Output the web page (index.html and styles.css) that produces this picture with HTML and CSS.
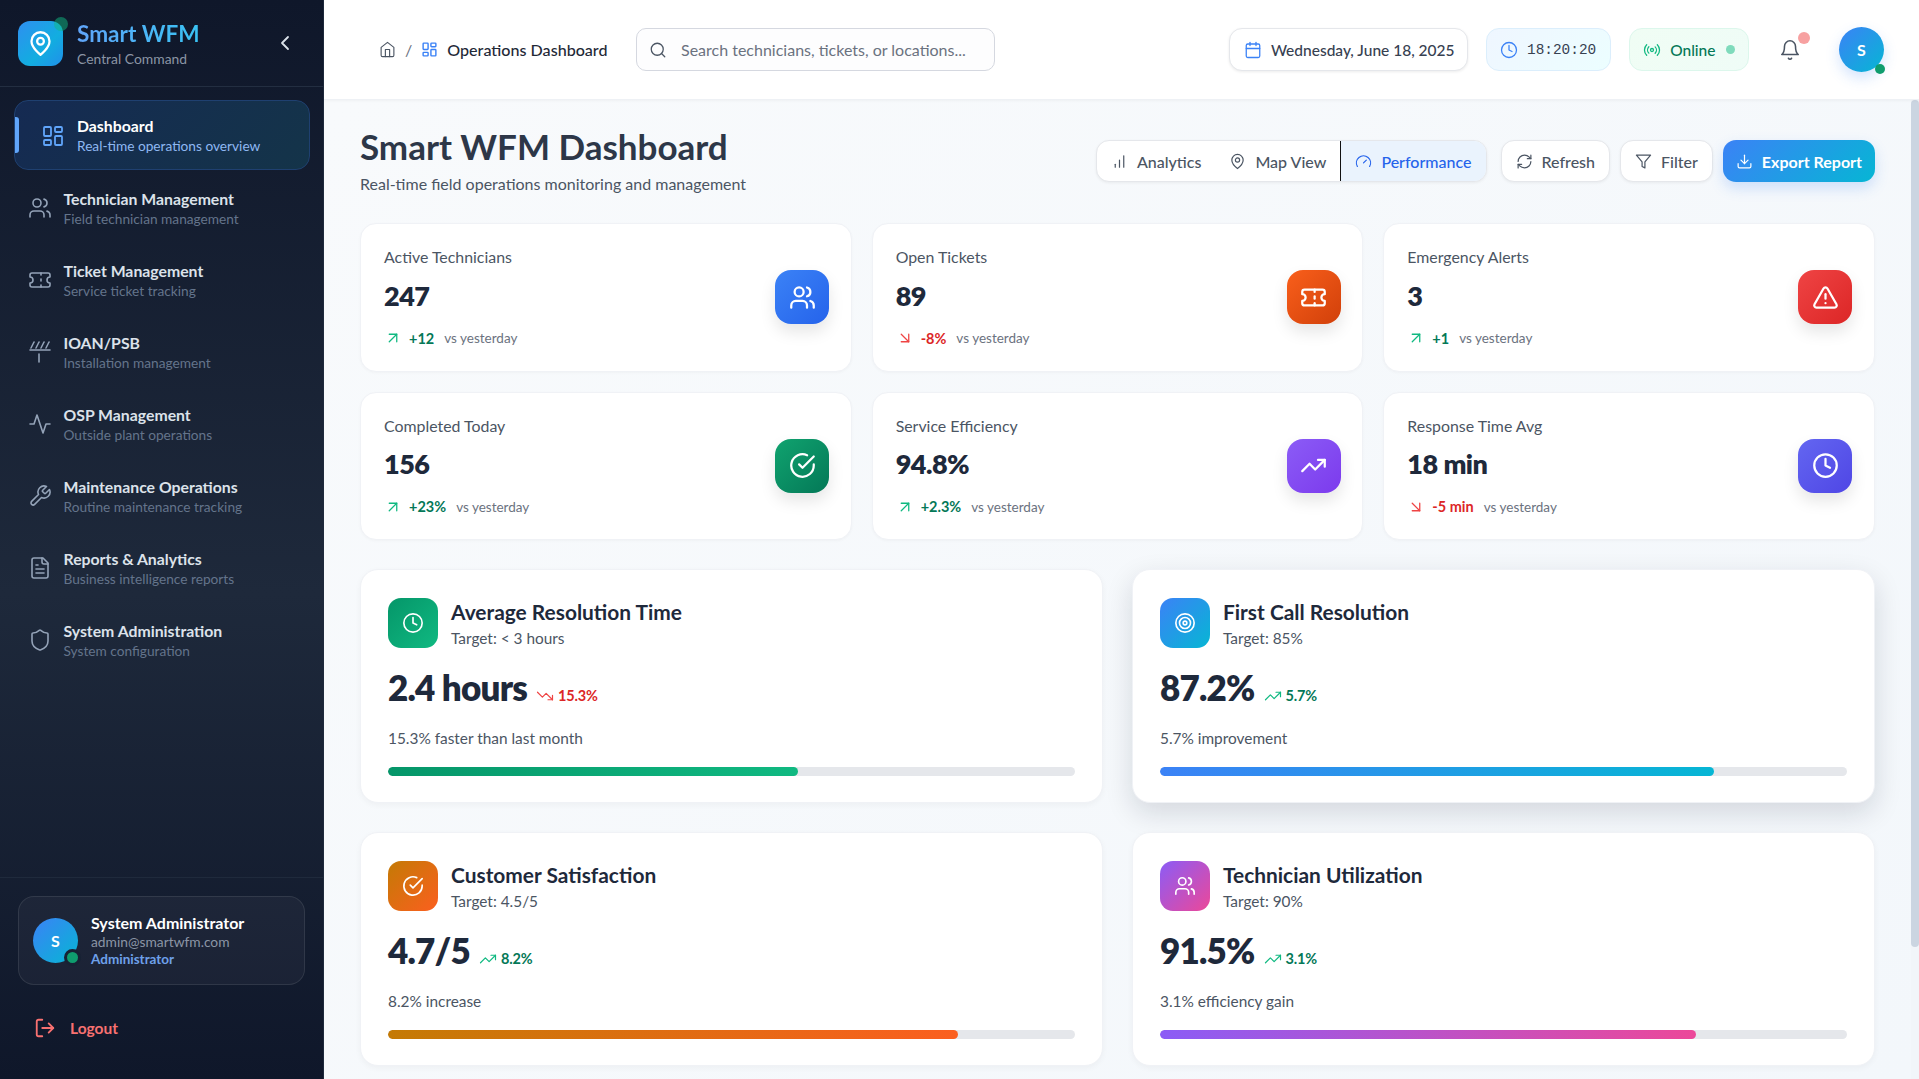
FILE: index.html
```html
<!DOCTYPE html>
<html lang="en">
<head>
<meta charset="UTF-8">
<meta name="viewport" content="width=device-width, initial-scale=1.0">
<title>Smart WFM Dashboard</title>
<link rel="stylesheet" href="styles.css">
</head>
<body>

<!-- icon sprite -->
<svg class="sprite" xmlns="http://www.w3.org/2000/svg">
    <symbol id="i-dashboard" viewBox="0 0 24 24"><rect x="3" y="3" width="7" height="9" rx="1"/><rect x="14" y="3" width="7" height="5" rx="1"/><rect x="14" y="12" width="7" height="9" rx="1"/><rect x="3" y="16" width="7" height="5" rx="1"/></symbol>
    <symbol id="i-users" viewBox="0 0 24 24"><path d="M16 21v-2a4 4 0 0 0-4-4H6a4 4 0 0 0-4 4v2"/><circle cx="9" cy="7" r="4"/><path d="M22 21v-2a4 4 0 0 0-3-3.87"/><path d="M16 3.13a4 4 0 0 1 0 7.75"/></symbol>
    <symbol id="i-ticket" viewBox="0 0 24 24"><path d="M2 9a3 3 0 0 1 0 6v2a2 2 0 0 0 2 2h16a2 2 0 0 0 2-2v-2a3 3 0 0 1 0-6V7a2 2 0 0 0-2-2H4a2 2 0 0 0-2 2Z"/><path d="M13 5v2"/><path d="M13 17v2"/><path d="M13 11v2"/></symbol>
    <symbol id="i-pole" viewBox="0 0 24 24"><path d="M6 2 3 8"/><path d="M11 2 8 8"/><path d="M16 2l-3 6"/><path d="M21 2l-3 6"/><path d="M2 10h20"/><path d="M11 14v8"/></symbol>
    <symbol id="i-activity" viewBox="0 0 24 24"><path d="M22 12h-4l-3 9L9 3l-3 9H2"/></symbol>
    <symbol id="i-wrench" viewBox="0 0 24 24"><path d="M14.7 6.3a1 1 0 0 0 0 1.4l1.6 1.6a1 1 0 0 0 1.4 0l3.77-3.77a6 6 0 0 1-7.94 7.94l-6.91 6.91a2.12 2.12 0 0 1-3-3l6.91-6.91a6 6 0 0 1 7.94-7.94l-3.76 3.76z"/></symbol>
    <symbol id="i-file" viewBox="0 0 24 24"><path d="M15 2H6a2 2 0 0 0-2 2v16a2 2 0 0 0 2 2h12a2 2 0 0 0 2-2V7Z"/><path d="M14 2v4a2 2 0 0 0 2 2h4"/><path d="M10 9H8"/><path d="M16 13H8"/><path d="M16 17H8"/></symbol>
    <symbol id="i-shield" viewBox="0 0 24 24"><path d="M20 13c0 5-3.5 7.5-7.66 8.95a1 1 0 0 1-.67-.01C7.5 20.5 4 18 4 13V6a1 1 0 0 1 1-1c2 0 4.5-1.2 6.24-2.72a1.17 1.17 0 0 1 1.52 0C14.51 3.81 17 5 19 5a1 1 0 0 1 1 1z"/></symbol>
    <symbol id="i-pin" viewBox="0 0 24 24"><path d="M20 10c0 6-8 12-8 12s-8-6-8-12a8 8 0 0 1 16 0Z"/><circle cx="12" cy="10" r="3"/></symbol>
    <symbol id="i-chevron" viewBox="0 0 24 24"><path d="m15 18-6-6 6-6"/></symbol>
    <symbol id="i-logout" viewBox="0 0 24 24"><path d="M9 21H5a2 2 0 0 1-2-2V5a2 2 0 0 1 2-2h4"/><path d="m16 17 5-5-5-5"/><path d="M21 12H9"/></symbol>
    <symbol id="i-home" viewBox="0 0 24 24"><path d="m3 9 9-7 9 7v11a2 2 0 0 1-2 2H5a2 2 0 0 1-2-2z"/><path d="M9 22V12h6v10"/></symbol>
    <symbol id="i-search" viewBox="0 0 24 24"><circle cx="11" cy="11" r="8"/><path d="m21 21-4.3-4.3"/></symbol>
    <symbol id="i-calendar" viewBox="0 0 24 24"><rect x="3" y="4" width="18" height="18" rx="2"/><path d="M16 2v4"/><path d="M8 2v4"/><path d="M3 10h18"/></symbol>
    <symbol id="i-clock" viewBox="0 0 24 24"><circle cx="12" cy="12" r="10"/><path d="M12 6v6l4 2"/></symbol>
    <symbol id="i-radio" viewBox="0 0 24 24"><path d="M4.9 19.1C1 15.2 1 8.8 4.9 4.9"/><path d="M7.8 16.2c-2.3-2.3-2.3-6.1 0-8.5"/><circle cx="12" cy="12" r="2"/><path d="M16.2 7.8c2.3 2.3 2.3 6.1 0 8.5"/><path d="M19.1 4.9C23 8.8 23 15.1 19.1 19"/></symbol>
    <symbol id="i-bell" viewBox="0 0 24 24"><path d="M6 8a6 6 0 0 1 12 0c0 7 3 9 3 9H3s3-2 3-9"/><path d="M10.3 21a1.94 1.94 0 0 0 3.4 0"/></symbol>
    <symbol id="i-bars" viewBox="0 0 24 24"><path d="M12 20V10"/><path d="M18 20V4"/><path d="M6 20v-4"/></symbol>
    <symbol id="i-gauge" viewBox="0 0 24 24"><path d="m12 14 4-4"/><path d="M3.34 19a10 10 0 1 1 17.32 0"/></symbol>
    <symbol id="i-refresh" viewBox="0 0 24 24"><path d="M3 12a9 9 0 0 1 9-9 9.75 9.75 0 0 1 6.74 2.74L21 8"/><path d="M21 3v5h-5"/><path d="M21 12a9 9 0 0 1-9 9 9.75 9.75 0 0 1-6.74-2.74L3 16"/><path d="M8 16H3v5"/></symbol>
    <symbol id="i-filter" viewBox="0 0 24 24"><path d="M22 3H2l8 9.46V19l4 2v-8.54Z"/></symbol>
    <symbol id="i-download" viewBox="0 0 24 24"><path d="M21 15v4a2 2 0 0 1-2 2H5a2 2 0 0 1-2-2v-4"/><path d="m7 10 5 5 5-5"/><path d="M12 15V3"/></symbol>
    <symbol id="i-up-right" viewBox="0 0 24 24"><path d="M7 7h10v10"/><path d="M7 17 17 7"/></symbol>
    <symbol id="i-down-right" viewBox="0 0 24 24"><path d="m7 7 10 10"/><path d="M17 7v10H7"/></symbol>
    <symbol id="i-check" viewBox="0 0 24 24"><path d="M22 11.08V12a10 10 0 1 1-5.93-9.14"/><path d="m9 11 3 3L22 4"/></symbol>
    <symbol id="i-trend-up" viewBox="0 0 24 24"><path d="m22 7-8.5 8.5-5-5L2 17"/><path d="M16 7h6v6"/></symbol>
    <symbol id="i-trend-down" viewBox="0 0 24 24"><path d="m22 17-8.5-8.5-5 5L2 7"/><path d="M16 17h6v-6"/></symbol>
    <symbol id="i-alert" viewBox="0 0 24 24"><path d="m21.73 18-8-14a2 2 0 0 0-3.48 0l-8 14A2 2 0 0 0 4 21h16a2 2 0 0 0 1.73-3"/><path d="M12 9v4"/><path d="M12 17h.01"/></symbol>
    <symbol id="i-target" viewBox="0 0 24 24"><circle cx="12" cy="12" r="10"/><circle cx="12" cy="12" r="6"/><circle cx="12" cy="12" r="2"/></symbol>
</svg>

<div class="app">

    <aside class="sidebar">
        <div class="brand">
            <div class="brand-logo">
                <svg class="icon"><use href="#i-pin"/></svg>
                <span class="brand-ping"></span>
            </div>
            <div class="brand-text">
                <div class="brand-name">Smart WFM</div>
                <div class="brand-sub">Central Command</div>
            </div>
            <svg class="icon brand-toggle"><use href="#i-chevron"/></svg>
        </div>

        <nav class="nav">
            <a class="nav-item active">
                <svg class="icon"><use href="#i-dashboard"/></svg>
                <div class="nav-text"><div class="nav-title">Dashboard</div><div class="nav-sub">Real-time operations overview</div></div>
            </a>
            <a class="nav-item">
                <svg class="icon"><use href="#i-users"/></svg>
                <div class="nav-text"><div class="nav-title">Technician Management</div><div class="nav-sub">Field technician management</div></div>
            </a>
            <a class="nav-item">
                <svg class="icon"><use href="#i-ticket"/></svg>
                <div class="nav-text"><div class="nav-title">Ticket Management</div><div class="nav-sub">Service ticket tracking</div></div>
            </a>
            <a class="nav-item">
                <svg class="icon"><use href="#i-pole"/></svg>
                <div class="nav-text"><div class="nav-title">IOAN/PSB</div><div class="nav-sub">Installation management</div></div>
            </a>
            <a class="nav-item">
                <svg class="icon"><use href="#i-activity"/></svg>
                <div class="nav-text"><div class="nav-title">OSP Management</div><div class="nav-sub">Outside plant operations</div></div>
            </a>
            <a class="nav-item">
                <svg class="icon"><use href="#i-wrench"/></svg>
                <div class="nav-text"><div class="nav-title">Maintenance Operations</div><div class="nav-sub">Routine maintenance tracking</div></div>
            </a>
            <a class="nav-item">
                <svg class="icon"><use href="#i-file"/></svg>
                <div class="nav-text"><div class="nav-title">Reports &amp; Analytics</div><div class="nav-sub">Business intelligence reports</div></div>
            </a>
            <a class="nav-item">
                <svg class="icon"><use href="#i-shield"/></svg>
                <div class="nav-text"><div class="nav-title">System Administration</div><div class="nav-sub">System configuration</div></div>
            </a>
        </nav>

        <div class="side-foot">
            <div class="user-card">
                <div class="avatar">S<span class="avatar-dot"></span></div>
                <div>
                    <div class="user-name">System Administrator</div>
                    <div class="user-mail">admin@smartwfm.com</div>
                    <div class="user-role">Administrator</div>
                </div>
            </div>
            <a class="logout"><svg class="icon"><use href="#i-logout"/></svg>Logout</a>
        </div>
    </aside>

    <div class="main">
        <header class="topbar">
            <div class="crumbs">
                <svg class="icon crumb-home"><use href="#i-home"/></svg>
                <span class="crumb-sep">/</span>
                <svg class="icon crumb-grid"><use href="#i-dashboard"/></svg>
                <span class="crumb-page">Operations Dashboard</span>
            </div>
            <div class="search">
                <svg class="icon"><use href="#i-search"/></svg>
                <span>Search technicians, tickets, or locations...</span>
            </div>
            <div class="topbar-right">
                <div class="pill pill-date"><svg class="icon"><use href="#i-calendar"/></svg>Wednesday, June 18, 2025</div>
                <div class="pill pill-time"><svg class="icon"><use href="#i-clock"/></svg>18:20:20</div>
                <div class="pill pill-online"><svg class="icon"><use href="#i-radio"/></svg>Online<span class="online-dot"></span></div>
                <div class="bell"><svg class="icon"><use href="#i-bell"/></svg><span class="bell-dot"></span></div>
                <div class="avatar avatar-top">S<span class="avatar-dot"></span></div>
            </div>
        </header>

        <div class="body">
        <main class="content">
            <div class="page-head">
                <div>
                    <h1>Smart WFM Dashboard</h1>
                    <p>Real-time field operations monitoring and management</p>
                </div>
                <div class="actions">
                    <div class="view-tabs">
                        <button class="tab"><svg class="icon"><use href="#i-bars"/></svg>Analytics</button>
                        <button class="tab"><svg class="icon"><use href="#i-pin"/></svg>Map View</button>
                        <button class="tab tab-active"><svg class="icon"><use href="#i-gauge"/></svg>Performance</button>
                    </div>
                    <button class="btn"><svg class="icon"><use href="#i-refresh"/></svg>Refresh</button>
                    <button class="btn"><svg class="icon"><use href="#i-filter"/></svg>Filter</button>
                    <button class="btn btn-primary"><svg class="icon"><use href="#i-download"/></svg>Export Report</button>
                </div>
            </div>

            <section class="stats">
                <div class="stat">
                    <div>
                        <div class="stat-label">Active Technicians</div>
                        <div class="stat-value">247</div>
                        <div class="stat-delta up"><svg class="icon"><use href="#i-up-right"/></svg><b>+12</b><span>vs yesterday</span></div>
                    </div>
                    <div class="stat-icon blue"><svg class="icon"><use href="#i-users"/></svg></div>
                </div>
                <div class="stat">
                    <div>
                        <div class="stat-label">Open Tickets</div>
                        <div class="stat-value">89</div>
                        <div class="stat-delta down"><svg class="icon"><use href="#i-down-right"/></svg><b>-8%</b><span>vs yesterday</span></div>
                    </div>
                    <div class="stat-icon orange"><svg class="icon"><use href="#i-ticket"/></svg></div>
                </div>
                <div class="stat">
                    <div>
                        <div class="stat-label">Emergency Alerts</div>
                        <div class="stat-value">3</div>
                        <div class="stat-delta up"><svg class="icon"><use href="#i-up-right"/></svg><b>+1</b><span>vs yesterday</span></div>
                    </div>
                    <div class="stat-icon red"><svg class="icon"><use href="#i-alert"/></svg></div>
                </div>
                <div class="stat">
                    <div>
                        <div class="stat-label">Completed Today</div>
                        <div class="stat-value">156</div>
                        <div class="stat-delta up"><svg class="icon"><use href="#i-up-right"/></svg><b>+23%</b><span>vs yesterday</span></div>
                    </div>
                    <div class="stat-icon green"><svg class="icon"><use href="#i-check"/></svg></div>
                </div>
                <div class="stat">
                    <div>
                        <div class="stat-label">Service Efficiency</div>
                        <div class="stat-value">94.8%</div>
                        <div class="stat-delta up"><svg class="icon"><use href="#i-up-right"/></svg><b>+2.3%</b><span>vs yesterday</span></div>
                    </div>
                    <div class="stat-icon purple"><svg class="icon"><use href="#i-trend-up"/></svg></div>
                </div>
                <div class="stat">
                    <div>
                        <div class="stat-label">Response Time Avg</div>
                        <div class="stat-value">18 min</div>
                        <div class="stat-delta down"><svg class="icon"><use href="#i-down-right"/></svg><b>-5 min</b><span>vs yesterday</span></div>
                    </div>
                    <div class="stat-icon indigo"><svg class="icon"><use href="#i-clock"/></svg></div>
                </div>
            </section>

            <section class="kpis">
                <div class="kpi">
                    <div class="kpi-head">
                        <div class="kpi-icon g-green"><svg class="icon"><use href="#i-clock"/></svg></div>
                        <div><div class="kpi-title">Average Resolution Time</div><div class="kpi-target">Target: &lt; 3 hours</div></div>
                    </div>
                    <div class="kpi-value">2.4 hours<span class="kpi-delta down"><svg class="icon"><use href="#i-trend-down"/></svg>15.3%</span></div>
                    <div class="kpi-desc">15.3% faster than last month</div>
                    <div class="bar"><div class="bar-fill g-green" style="width:59.7%"></div></div>
                </div>
                <div class="kpi kpi-hover">
                    <div class="kpi-head">
                        <div class="kpi-icon g-blue"><svg class="icon"><use href="#i-target"/></svg></div>
                        <div><div class="kpi-title">First Call Resolution</div><div class="kpi-target">Target: 85%</div></div>
                    </div>
                    <div class="kpi-value">87.2%<span class="kpi-delta up"><svg class="icon"><use href="#i-trend-up"/></svg>5.7%</span></div>
                    <div class="kpi-desc">5.7% improvement</div>
                    <div class="bar"><div class="bar-fill g-blue" style="width:80.6%"></div></div>
                </div>
                <div class="kpi">
                    <div class="kpi-head">
                        <div class="kpi-icon g-amber"><svg class="icon"><use href="#i-check"/></svg></div>
                        <div><div class="kpi-title">Customer Satisfaction</div><div class="kpi-target">Target: 4.5/5</div></div>
                    </div>
                    <div class="kpi-value">4.7/5<span class="kpi-delta up"><svg class="icon"><use href="#i-trend-up"/></svg>8.2%</span></div>
                    <div class="kpi-desc">8.2% increase</div>
                    <div class="bar"><div class="bar-fill g-amber" style="width:83%"></div></div>
                </div>
                <div class="kpi">
                    <div class="kpi-head">
                        <div class="kpi-icon g-pink"><svg class="icon"><use href="#i-users"/></svg></div>
                        <div><div class="kpi-title">Technician Utilization</div><div class="kpi-target">Target: 90%</div></div>
                    </div>
                    <div class="kpi-value">91.5%<span class="kpi-delta up"><svg class="icon"><use href="#i-trend-up"/></svg>3.1%</span></div>
                    <div class="kpi-desc">3.1% efficiency gain</div>
                    <div class="bar"><div class="bar-fill g-pink" style="width:78%"></div></div>
                </div>
            </section>
        </main>
        <div class="scroll-track"><div class="scroll-thumb"></div></div>
        </div>
    </div>
</div>

</body>
</html>
```

FILE: styles.css
```css
* {
    box-sizing: border-box;
}
body {
    margin: 0;
    font-family: Lato, "Noto Sans", sans-serif;
    color: #1f2937;
    background: #f7f9fc;
    overflow: hidden;
}
.sprite {
    display: none;
}
.icon {
    width: 22px;
    height: 22px;
    flex: none;
    fill: none;
    stroke: currentColor;
    stroke-width: 2;
    stroke-linecap: round;
    stroke-linejoin: round;
}
.app {
    display: flex;
    height: 100vh;
}

/* sidebar */
.sidebar {
    width: 324px;
    flex: none;
    display: flex;
    flex-direction: column;
    background: linear-gradient(180deg, #0f172a 0%, #1e293b 55%, #0f172a 100%);
    border-right: 1px solid #1f2a3c;
    color: #fff;
}
.brand {
    height: 87px;
    display: flex;
    align-items: center;
    padding: 0 26px 0 18px;
    border-bottom: 1px solid #232e41;
}
.brand-logo {
    position: relative;
    width: 45px;
    height: 45px;
    margin-top: 1px;
    border-radius: 12px;
    background: linear-gradient(135deg, #2f8ff0 0%, #12ade0 60%, #2090ea 100%);
    display: flex;
    align-items: center;
    justify-content: center;
}
.brand-logo .icon {
    width: 27px;
    height: 27px;
}
.brand-ping {
    position: absolute;
    top: -4px;
    right: -5px;
    width: 14px;
    height: 14px;
    border-radius: 50%;
    background: #10b981;
    opacity: 0.5;
}
.brand-text {
    flex: 1;
    margin: 3px 0 0 14px;
}
.brand-name {
    font-size: 22.6px;
    line-height: 28px;
    font-weight: 700;
    background: linear-gradient(90deg, #60a5fa, #22d3ee);
    -webkit-background-clip: text;
    background-clip: text;
    color: transparent;
}
.brand-sub {
    font-size: 13.9px;
    line-height: 20px;
    margin-top: 1px;
    color: #8b95a5;
}
.brand-toggle {
    color: #dbe2ea;
    width: 24px;
    height: 24px;
    stroke-width: 1.8;
    margin-top: -1px;
}
.nav {
    flex: 1;
    padding: 13px 13px 0 14px;
    display: flex;
    flex-direction: column;
    gap: 2px;
}
.nav-item {
    position: relative;
    height: 70px;
    display: flex;
    align-items: center;
    gap: 12px;
    padding: 0 12.5px;
    border: 1px solid transparent;
    border-radius: 14px;
    color: #94a3b8;
}
.nav-item .icon {
    width: 24px;
    height: 24px;
    stroke-width: 1.6;
    margin-top: 2px;
}
.nav-text {
    margin-top: 7px;
}
.nav-item.active {
    padding-left: 26px;
    color: #60a5fa;
    background: linear-gradient(135deg, #152a52, #143449);
    border-color: #1f4070;
}
.nav-item.active .icon {
    stroke-width: 1.8;
}
.nav-item.active .nav-text {
    margin-top: 5px;
}
.nav-item.active::before {
    content: "";
    position: absolute;
    left: 0;
    top: 16px;
    width: 4px;
    height: 36px;
    border-radius: 0 3px 3px 0;
    background: #60a5fa;
}
.nav-title {
    font-size: 15.8px;
    line-height: 20px;
    font-weight: 700;
    color: #dce2ea;
    margin-top: -4px;
}
.nav-sub {
    font-size: 13.7px;
    line-height: 20px;
    color: #64748b;
}
.nav-item.active .nav-title {
    color: #fff;
}
.nav-item.active .nav-sub {
    color: #8fb8f2;
}
.side-foot {
    border-top: 1px solid #1f2a3c;
    padding: 18px 18px 0;
    height: 202px;
}
.user-card {
    height: 89px;
    display: flex;
    align-items: center;
    gap: 13px;
    padding: 0 14px;
    border-radius: 16px;
    background: rgba(255, 255, 255, 0.04);
    border: 1px solid rgba(255, 255, 255, 0.09);
}
.avatar {
    position: relative;
    width: 45px;
    height: 45px;
    flex: none;
    border-radius: 50%;
    background: linear-gradient(135deg, #3b82f6, #06b6d4);
    color: #fff;
    font-weight: 700;
    font-size: 16px;
    display: flex;
    align-items: center;
    justify-content: center;
}
.avatar-dot {
    position: absolute;
    right: -3px;
    bottom: -3px;
    width: 17px;
    height: 17px;
    border-radius: 50%;
    background: #0f9d6e;
    border: 3px solid #172234;
}
.user-name {
    font-size: 16px;
    line-height: 20px;
    font-weight: 700;
}
.user-mail {
    font-size: 13.8px;
    line-height: 18px;
    color: #8b95a5;
}
.user-role {
    font-size: 13.5px;
    line-height: 17px;
    font-weight: 700;
    color: #6ea0ea;
}
.logout {
    display: flex;
    align-items: center;
    gap: 14px;
    margin: 32px 0 0 16px;
    font-size: 15.5px;
    font-weight: 700;
    color: #f87171;
}

/* top bar */
.main {
    flex: 1;
    min-width: 0;
    display: flex;
    flex-direction: column;
}
.topbar {
    height: 100px;
    flex: none;
    display: flex;
    align-items: center;
    padding: 0 35px 0 55px;
    background: #fff;
    border-bottom: 1px solid #eef1f5;
    box-shadow: 0 1px 3px rgba(0, 0, 0, 0.04);
    z-index: 2;
}
.crumbs {
    display: flex;
    align-items: center;
    font-size: 16.1px;
    font-weight: 500;
    color: #1f2937;
}
.crumb-home {
    width: 17px;
    height: 17px;
    color: #4b5563;
    stroke-width: 1.6;
}
.crumb-sep {
    margin: 0 9px;
    color: #6b7280;
    font-weight: 400;
}
.crumb-grid {
    width: 17px;
    height: 17px;
    color: #3b82f6;
}
.crumb-page {
    margin-left: 9px;
}
.search {
    width: 359px;
    height: 43px;
    margin-left: 28px;
    display: flex;
    align-items: center;
    gap: 14.5px;
    padding: 0 12px;
    border: 1px solid #d5d8e0;
    border-radius: 10px;
    background: #fdfdfe;
    font-size: 16px;
    color: #6b7280;
}
.search .icon {
    width: 18px;
    height: 18px;
    color: #4b5563;
    stroke-width: 1.7;
}
.topbar-right {
    margin-left: auto;
    display: flex;
    align-items: center;
}
.pill {
    height: 43px;
    display: flex;
    align-items: center;
    gap: 9px;
    padding: 0 14px;
    border-radius: 13px;
    border: 1px solid #e5e7eb;
    font-size: 15.5px;
    font-weight: 500;
}
.pill .icon {
    width: 18px;
    height: 18px;
    stroke-width: 1.7;
    color: #3b82f6;
}
.pill-date {
    padding-right: 12px;
    background: #fff;
    color: #374151;
    box-shadow: 0 1px 3px rgba(0, 0, 0, 0.08);
}
.pill-time {
    margin-left: 18px;
    padding: 0 13.5px;
    background: linear-gradient(135deg, #eff6ff, #ecfeff);
    border-color: #dbeefc;
    font-family: "Liberation Mono", monospace;
    font-size: 14.4px;
    font-weight: 400;
    color: #374151;
}
.pill-online {
    margin-left: 18px;
    padding: 0 13.5px;
    background: linear-gradient(135deg, #f0fdf4, #effcf7);
    border-color: #dcf7ec;
    color: #047857;
}
.pill-online .icon {
    color: #10b981;
}
.online-dot {
    width: 9px;
    height: 9px;
    margin-left: 1px;
    border-radius: 50%;
    background: #10b981;
    opacity: 0.5;
}
.bell {
    position: relative;
    margin-left: 30px;
    color: #4b5563;
    height: 22px;
}
.bell .icon {
    stroke-width: 1.7;
}
.bell-dot {
    position: absolute;
    top: -7px;
    right: -9px;
    width: 12px;
    height: 12px;
    border-radius: 50%;
    background: #ef4444;
    opacity: 0.5;
}
.avatar-top {
    margin-left: 38px;
    box-shadow: 0 6px 14px rgba(59, 130, 246, 0.22);
}
.avatar-top .avatar-dot {
    right: -1px;
    bottom: -2px;
    width: 10px;
    height: 10px;
    border: none;
}

/* page */
.body {
    flex: 1;
    min-height: 0;
    display: flex;
}
.content {
    flex: 1;
    min-width: 0;
    overflow: hidden;
    padding: 24px 36px 0;
    background: linear-gradient(135deg, #f8fafc, #f3f7fb);
}
.scroll-track {
    width: 8px;
    flex: none;
    background: #f1f5f9;
}
.scroll-thumb {
    height: 847px;
    background: #cbd5e1;
    border-radius: 4px;
}
.page-head {
    display: flex;
    justify-content: space-between;
    align-items: flex-start;
    margin-bottom: 29px;
}
h1 {
    margin: -1px 0 0;
    font-size: 35px;
    line-height: 46px;
    font-weight: 700;
    color: #2d3748;
}
.page-head p {
    margin: 4px 0 0;
    font-size: 16px;
    line-height: 21px;
    color: #4b5563;
}
.actions {
    display: flex;
    align-items: center;
    gap: 10px;
    margin-top: 16px;
}
button {
    font-family: inherit;
    cursor: pointer;
}
.view-tabs {
    display: flex;
    height: 42px;
    margin-right: 4px;
    background: #fff;
    border: 1px solid #e5e7eb;
    border-radius: 13px;
    box-shadow: 0 1px 3px rgba(0, 0, 0, 0.06);
    overflow: hidden;
}
.tab, .btn {
    display: flex;
    align-items: center;
    gap: 9px;
    font-size: 16px;
    font-weight: 500;
    color: #4b5563;
    background: none;
    border: none;
}
.tab {
    padding: 0 14px;
}
.tab .icon, .btn .icon {
    width: 17px;
    height: 17px;
    stroke-width: 1.7;
}
.tab-active {
    color: #2563eb;
    background: #eaf3fd;
    border-left: 1px solid #111;
}
.tab-active .icon {
    color: #2563eb;
}
.btn {
    height: 42px;
    padding: 0 14px;
    background: #fff;
    border: 1px solid #e5e7eb;
    border-radius: 13px;
    box-shadow: 0 1px 3px rgba(0, 0, 0, 0.06);
}
.btn-primary {
    color: #fff;
    font-weight: 700;
    padding: 0 13px;
    border: none;
    background: linear-gradient(135deg, #3b82f6, #06b6d4);
    box-shadow: 0 6px 14px rgba(59, 130, 246, 0.22);
}

/* stat cards */
.stats {
    display: grid;
    grid-template-columns: repeat(3, 1fr);
    gap: 20px;
    margin-bottom: 28.5px;
}
.stat {
    height: 148.5px;
    display: flex;
    align-items: center;
    justify-content: space-between;
    padding: 0 21.5px 0 23px;
    background: #fff;
    border: 1px solid #f0f2f6;
    border-radius: 16px;
    box-shadow: 0 1px 3px rgba(0, 0, 0, 0.03);
}
.stat-label {
    font-size: 15.9px;
    line-height: 20px;
    color: #4b5563;
}
.stat-value {
    font-size: 27px;
    line-height: 36px;
    font-weight: 800;
    letter-spacing: -0.5px;
    margin-top: 10.5px;
    color: #1e293b;
}
.stat-delta {
    display: flex;
    align-items: center;
    font-size: 14.5px;
    margin-top: 15.5px;
}
.stat-delta .icon {
    width: 18px;
    height: 18px;
    stroke-width: 1.7;
    margin-right: 7px;
}
.stat-delta b {
    margin-right: 10px;
}
.stat-delta span {
    font-size: 13.5px;
    color: #6b7280;
}
.up {
    color: #047857;
}
.down {
    color: #dc2626;
}
.up .icon {
    color: #10b981;
}
.down .icon {
    color: #ef4444;
}
.stat-icon {
    width: 54px;
    height: 54px;
    border-radius: 16px;
    display: flex;
    align-items: center;
    justify-content: center;
    color: #fff;
    box-shadow: 0 8px 16px rgba(0, 0, 0, 0.1);
}
.stat-icon .icon {
    width: 27px;
    height: 27px;
}
.blue { background: linear-gradient(135deg, #3b82f6, #2563eb); }
.orange { background: linear-gradient(135deg, #f95f1b, #d1400a); }
.red { background: linear-gradient(135deg, #ef4444, #dc2626); }
.green { background: linear-gradient(135deg, #10a36f, #047857); }
.purple { background: linear-gradient(135deg, #8b5cf6, #7c3aed); }
.indigo { background: linear-gradient(135deg, #6366f1, #4f46e5); }

/* kpi cards */
.kpis {
    display: grid;
    grid-template-columns: repeat(2, 1fr);
    gap: 29px;
}
.kpi {
    height: 234px;
    padding: 28px 27px 0;
    background: #fff;
    border: 1px solid #f0f2f6;
    border-radius: 18px;
    box-shadow: 0 2px 6px rgba(0, 0, 0, 0.04);
}
.kpi-hover {
    box-shadow: 0 10px 28px rgba(15, 23, 42, 0.14);
}
.kpi-head {
    display: flex;
    gap: 13px;
    align-items: flex-start;
}
.kpi-icon {
    width: 50px;
    height: 50px;
    flex: none;
    border-radius: 13px;
    display: flex;
    align-items: center;
    justify-content: center;
    color: #fff;
}
.kpi-icon .icon {
    width: 22px;
    height: 22px;
    stroke-width: 1.8;
}
.kpi-title {
    font-size: 20.9px;
    line-height: 26px;
    font-weight: 700;
    margin-top: 1px;
    color: #1e293b;
}
.kpi-target {
    font-size: 15.4px;
    line-height: 20px;
    margin-top: 3.4px;
    color: #4b5563;
}
.kpi-value {
    margin-top: 16.5px;
    font-size: 35px;
    line-height: 46px;
    font-weight: 800;
    letter-spacing: -0.8px;
    color: #1e293b;
}
.kpi-delta {
    font-size: 14.5px;
    margin-left: 9px;
    font-weight: 700;
    letter-spacing: -0.2px;
}
.kpi-delta .icon {
    width: 18px;
    height: 18px;
    stroke-width: 1.6;
    margin-right: 4px;
    vertical-align: -4px;
}
.kpi-desc {
    margin-top: 8.5px;
    font-size: 15.4px;
    line-height: 20px;
    color: #4b5563;
}
.bar {
    height: 9px;
    margin-top: 19.5px;
    border-radius: 5px;
    background: #e5e7eb;
    overflow: hidden;
}
.bar-fill {
    height: 100%;
    border-radius: 5px;
}
.g-green { background: linear-gradient(90deg, #059669, #10b981); }
.kpi-icon.g-green { background: linear-gradient(135deg, #059669, #10b981); }
.g-blue { background: linear-gradient(90deg, #3b82f6, #06b6d4); }
.kpi-icon.g-blue { background: linear-gradient(135deg, #3b82f6, #06b6d4); }
.g-amber { background: linear-gradient(90deg, #c47a05, #fb5f1f); }
.kpi-icon.g-amber { background: linear-gradient(135deg, #c47a05, #fb5f1f); }
.g-pink { background: linear-gradient(90deg, #8b5cf6, #ec4899); }
.kpi-icon.g-pink { background: linear-gradient(135deg, #8b5cf6, #ec4899); }
```
